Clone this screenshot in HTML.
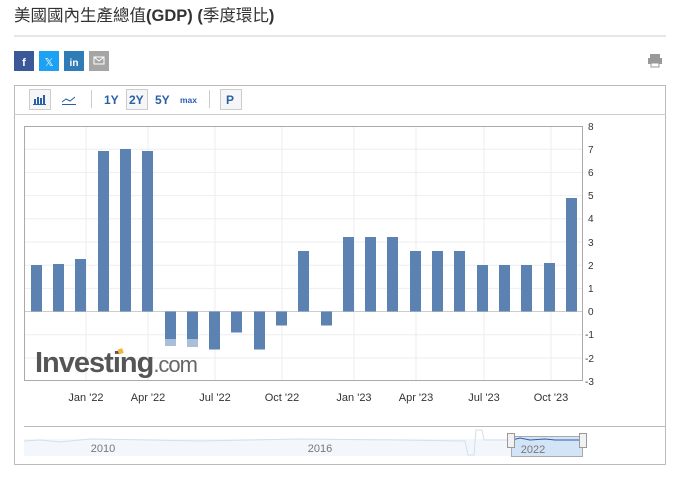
<!DOCTYPE html>
<html><head><meta charset="utf-8"><style>
body{margin:0;background:#fff;width:678px;height:480px;overflow:hidden;font-family:"Liberation Sans","Noto Sans CJK TC",sans-serif;}
</style></head><body>
<svg width="678" height="480" xmlns="http://www.w3.org/2000/svg" font-family="Liberation Sans, Noto Sans CJK TC, sans-serif">
<text x="14" y="21" font-size="16.5" fill="#333">美國國內生產總值<tspan font-weight="bold">(GDP)</tspan> <tspan font-weight="bold">(</tspan>季度環比<tspan font-weight="bold">)</tspan></text>
<line x1="14" y1="36" x2="666" y2="36" stroke="#ccc"/>
<rect x="14" y="51" width="20" height="20" fill="#3b5998"/><text x="24" y="66" font-size="11" fill="#fff" text-anchor="middle" font-weight="bold">f</text>
<rect x="39" y="51" width="20" height="20" fill="#1da1f2"/><text x="49" y="66" font-size="11" fill="#fff" text-anchor="middle">𝕏</text>
<rect x="64" y="51" width="20" height="20" fill="#2e7bb6"/><text x="74" y="66" font-size="10" fill="#fff" text-anchor="middle" font-weight="bold">in</text>
<rect x="89" y="51" width="20" height="20" fill="#a5a5a5"/><rect x="94" y="57" width="10" height="7" fill="none" stroke="#fff"/><path d="M94 57 L99 61 L104 57" stroke="#fff" fill="none"/>
<g fill="#999"><rect x="650" y="54" width="10" height="4"/><rect x="648" y="58" width="14" height="6"/><rect x="651" y="63" width="8" height="4" fill="#fff" stroke="#999"/></g>
<rect x="14.5" y="85.5" width="651" height="379" fill="#fff" stroke="#bbb"/>
<line x1="14" y1="114.5" x2="666" y2="114.5" stroke="#ccc"/>
<rect x="29.5" y="89.5" width="21" height="20" fill="#f6f6f6" stroke="#ccc"/>
<g fill="#2a60a8"><rect x="34" y="99" width="2" height="5"/><rect x="37" y="97" width="2" height="7"/><rect x="40" y="98" width="2" height="6"/><rect x="43" y="95" width="2" height="9"/><rect x="33" y="104" width="13" height="1"/></g>
<path d="M62 102 L66 99 L70 101 L75 97" stroke="#2a60a8" fill="none"/><rect x="62" y="104" width="14" height="1" fill="#2a60a8"/>
<line x1="91.5" y1="90" x2="91.5" y2="108" stroke="#ccc"/>
<g font-size="12" font-weight="bold" fill="#2a60a8"><text x="104" y="104">1Y</text>
<rect x="126.5" y="89.5" width="21" height="20" fill="#f6f6f6" stroke="#ccc"/><text x="129" y="104">2Y</text>
<text x="155" y="104">5Y</text><text x="180" y="103" font-size="8.5">max</text>
<rect x="220.5" y="89.5" width="21" height="20" fill="#f6f6f6" stroke="#ccc"/><text x="226" y="104">P</text></g>
<line x1="209.5" y1="90" x2="209.5" y2="108" stroke="#ccc"/>
<!-- grid -->
<g stroke="#eee">
<line x1="24" x2="583" y1="149.2" y2="149.2"/><line x1="24" x2="583" y1="172.4" y2="172.4"/><line x1="24" x2="583" y1="195.6" y2="195.6"/><line x1="24" x2="583" y1="218.8" y2="218.8"/><line x1="24" x2="583" y1="242" y2="242"/><line x1="24" x2="583" y1="265.2" y2="265.2"/><line x1="24" x2="583" y1="288.4" y2="288.4"/><line x1="24" x2="583" y1="334.8" y2="334.8"/><line x1="24" x2="583" y1="358" y2="358"/>
<line x1="86" x2="86" y1="126" y2="381"/><line x1="148" x2="148" y1="126" y2="381"/><line x1="215" x2="215" y1="126" y2="381"/><line x1="282" x2="282" y1="126" y2="381"/><line x1="354" x2="354" y1="126" y2="381"/><line x1="416" x2="416" y1="126" y2="381"/><line x1="484" x2="484" y1="126" y2="381"/><line x1="551" x2="551" y1="126" y2="381"/>
</g>
<line x1="24" x2="583" y1="311.5" y2="311.5" stroke="#ccc"/>
<rect x="24.5" y="126.5" width="558" height="254" fill="none" stroke="#aaa"/>
<g fill="#5b82b0">
<rect x="31" y="265" width="11" height="46.5"/><rect x="53" y="264" width="11" height="47.5"/><rect x="75" y="259" width="11" height="52.5"/><rect x="98" y="151" width="11" height="160.5"/><rect x="120" y="149" width="11" height="162.5"/><rect x="142" y="151" width="11" height="160.5"/>
<rect x="165" y="311.5" width="11" height="27.5"/><rect x="187" y="311.5" width="11" height="27.5"/><rect x="209" y="311.5" width="11" height="38"/><rect x="231" y="311.5" width="11" height="21"/><rect x="254" y="311.5" width="11" height="38"/><rect x="276" y="311.5" width="11" height="14"/>
<rect x="298" y="251" width="11" height="60.5"/><rect x="321" y="311.5" width="11" height="14"/><rect x="343" y="237" width="11" height="74.5"/><rect x="365" y="237" width="11" height="74.5"/><rect x="387" y="237" width="11" height="74.5"/><rect x="410" y="251" width="11" height="60.5"/><rect x="432" y="251" width="11" height="60.5"/><rect x="454" y="251" width="11" height="60.5"/><rect x="477" y="265" width="11" height="46.5"/><rect x="499" y="265" width="11" height="46.5"/><rect x="521" y="265" width="11" height="46.5"/><rect x="544" y="263" width="11" height="48.5"/><rect x="566" y="198" width="11" height="113.5"/>
</g>
<g fill="#a9bfd9"><rect x="165" y="339" width="11" height="7"/><rect x="187" y="339" width="11" height="8"/></g>
<g font-size="10" fill="#333"><text x="588" y="130">8</text><text x="588" y="153">7</text><text x="588" y="176">6</text><text x="588" y="199">5</text><text x="588" y="222">4</text><text x="588" y="246">3</text><text x="588" y="269">2</text><text x="588" y="292">1</text><text x="588" y="315">0</text><text x="585" y="338">-1</text><text x="585" y="362">-2</text><text x="585" y="385">-3</text></g>
<text x="35" y="372" font-size="29" font-weight="bold" fill="#555" letter-spacing="-1">Investing<tspan font-weight="normal" font-size="22" fill="#666">.com</tspan></text>
<rect x="118" y="349" width="5" height="5" fill="#f7b53a" transform="rotate(-20 120 351)"/>
<g font-size="11" fill="#333" text-anchor="middle"><text x="86" y="401">Jan '22</text><text x="148" y="401">Apr '22</text><text x="215" y="401">Jul '22</text><text x="282" y="401">Oct '22</text><text x="354" y="401">Jan '23</text><text x="416" y="401">Apr '23</text><text x="484" y="401">Jul '23</text><text x="551" y="401">Oct '23</text></g>
<line x1="24" x2="666" y1="426.5" y2="426.5" stroke="#bbb"/>
<rect x="24" y="439" width="487" height="17" fill="#f3f7fc"/>
<path d="M24 441 L40 440 L60 442 L90 439 L150 440 L200 441 L300 439 L400 440 L465 441 L468 455 L474 455 L476 430 L482 430 L484 440 L511 440" stroke="#cfe0f0" fill="none"/>
<rect x="511.5" y="436.5" width="71" height="20" fill="#d4e4f7" stroke="#aaa"/>
<path d="M512 440 L520 438 L530 440 L545 439 L555 440 L582 440" stroke="#2a60a8" fill="none"/>
<g font-size="11" fill="#777" text-anchor="middle"><text x="103" y="452">2010</text><text x="320" y="452">2016</text><text x="533" y="453">2022</text></g>
<rect x="507.5" y="433.5" width="7" height="14" fill="#f2f2f2" stroke="#999"/><rect x="579.5" y="433.5" width="7" height="14" fill="#f2f2f2" stroke="#999"/>
</svg>
</body></html>
